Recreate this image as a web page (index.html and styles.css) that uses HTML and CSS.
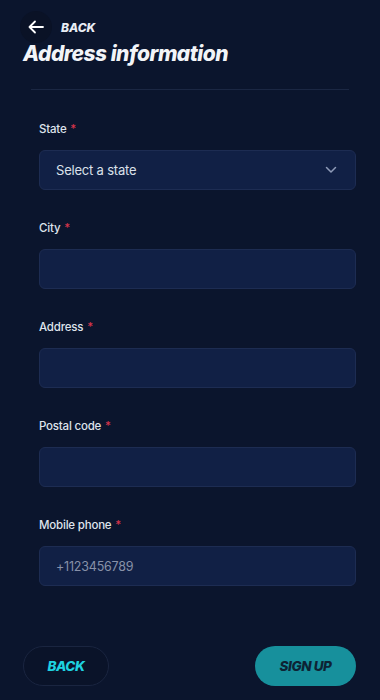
FILE: index.html
```html
<!DOCTYPE html>
<html lang="en">

<head>
    <meta charset="UTF-8">
    <meta name="viewport" content="width=device-width, initial-scale=1.0">
    <title>Address information</title>
    <link rel="stylesheet" href="styles.css">
</head>

<body>
    <div class="header">
        <div class="back-row">
            <span class="back-icon">
                <svg width="16" height="14" viewBox="0 0 16 14" fill="none" stroke="#fff" stroke-width="1.8" stroke-linecap="round" stroke-linejoin="round">
                    <path d="M15 7H1.5M7 1.5L1.5 7L7 12.5" />
                </svg>
            </span>
            <span class="back-text">BACK</span>
        </div>
        <h1 class="title">Address information</h1>
    </div>
    <div class="divider"></div>

    <div class="form">
        <div class="field">
            <p class="label">State <span class="req">*</span></p>
            <div class="input select">
                <span>Select a state</span>
                <svg width="12" height="8" viewBox="0 0 12 8" fill="none" stroke="#8f9bb8" stroke-width="1.5" stroke-linecap="round" stroke-linejoin="round">
                    <path d="M1.5 1.5L6 6L10.5 1.5" />
                </svg>
            </div>
        </div>
        <div class="field">
            <p class="label">City <span class="req">*</span></p>
            <div class="input"></div>
        </div>
        <div class="field">
            <p class="label">Address <span class="req">*</span></p>
            <div class="input"></div>
        </div>
        <div class="field">
            <p class="label">Postal code <span class="req">*</span></p>
            <div class="input"></div>
        </div>
        <div class="field">
            <p class="label">Mobile phone <span class="req">*</span></p>
            <div class="input placeholder">+1123456789</div>
        </div>
    </div>

    <div class="footer">
        <button class="btn btn-back">BACK</button>
        <button class="btn btn-signup">SIGN UP</button>
    </div>
</body>

</html>
```
FILE: styles.css
```css
* {
    margin: 0;
    padding: 0;
    box-sizing: border-box;
}

body {
    font-family: Inter, "Noto Sans", sans-serif;
    font-size: 14px;
    color: #fff;
    background-color: #0b152d;
    width: 380px;
    height: 700px;
    overflow: hidden;
}

.header {
    padding: 11px 0 0 23px;
}

.back-row {
    display: flex;
    align-items: center;
    margin-left: -3px;
}

.back-icon {
    display: flex;
    align-items: center;
    justify-content: center;
    width: 32px;
    height: 32px;
    border-radius: 50%;
    background-color: #0a1226;
}

.back-text {
    margin-left: 9px;
    font-size: 12px;
    font-weight: 800;
    font-style: italic;
    color: #e8ecf4;
}

.title {
    margin-top: -2px;
    font-size: 21px;
    line-height: 26px;
    font-weight: 800;
    font-style: italic;
    letter-spacing: -0.5px;
    color: #f2f4f8;
}

.divider {
    height: 1px;
    margin: 22px 31px 0 31px;
    background-color: #1b2743;
}

.form {
    padding: 31px 24px 0 39px;
}

.field {
    margin-bottom: 30px;
}

.label {
    font-size: 11.5px;
    line-height: 16px;
    font-weight: 500;
    letter-spacing: -0.2px;
    color: #dfe3ec;
    margin-bottom: 13px;
}

.req {
    color: #d8344b;
    margin-left: 1px;
}

.input {
    display: flex;
    align-items: center;
    height: 40px;
    padding: 0 16px;
    border: 1px solid #1d2c52;
    border-radius: 6px;
    background-color: #112045;
}

.select {
    justify-content: space-between;
    font-size: 13px;
    letter-spacing: -0.2px;
    color: #dbe0ea;
}

.select svg {
    margin-right: 2px;
}

.placeholder {
    font-size: 12.5px;
    letter-spacing: -0.2px;
    color: #8891a8;
}

.footer {
    display: flex;
    justify-content: space-between;
    padding: 30px 24px 0 23px;
}

.btn {
    height: 40px;
    border-radius: 20px;
    font-family: Inter, "Noto Sans", sans-serif;
    font-size: 13.5px;
    font-weight: 800;
    font-style: italic;
    letter-spacing: -0.4px;
    cursor: pointer;
}

.btn-back {
    width: 86px;
    border: 1px solid #1a2540;
    background-color: #0a1329;
    color: #1ed2e0;
}

.btn-signup {
    width: 101px;
    border: 0;
    background-color: #17909c;
    color: #0d2334;
}
```
